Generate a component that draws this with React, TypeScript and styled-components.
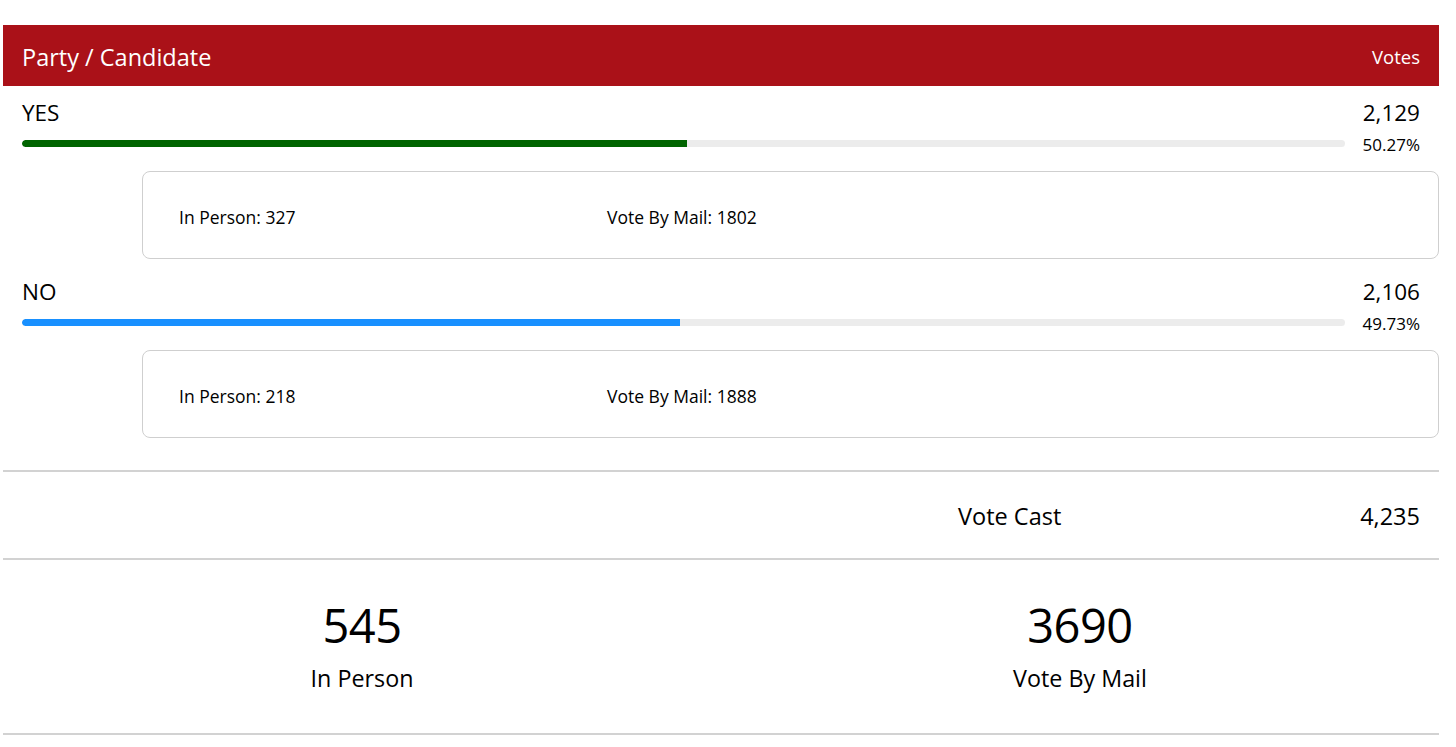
import React from "react";
import styled, { createGlobalStyle } from "styled-components";

const Global = createGlobalStyle`
  html, body { margin: 0; padding: 0; background: #fff; }
  body { font-family: "Open Sans", "Noto Sans", Arial, sans-serif; color: #000; }
`;

const Wrapper = styled.div`
  width: 1436px;
  margin: 25px 0 0 3px;
`;

const Header = styled.div`
  height: 61px;
  background: #aa1118;
  color: #fff;
  display: flex;
  align-items: center;
  justify-content: space-between;
  padding: 0 19px 0 19px;
  box-sizing: border-box;
`;

const HeaderTitle = styled.span`
  font-size: 23.5px;
  margin-top: 2px;
`;

const HeaderVotes = styled.span`
  font-size: 18.5px;
  margin-top: 2px;
`;

const Block = styled.div`
  padding: 14px 0 6px 19px;
`;

const NameRow = styled.div`
  display: flex;
  justify-content: space-between;
  align-items: center;
  height: 26px;
  padding-right: 19px;
  font-size: 22.5px;
  line-height: 26px;
`;

const BarRow = styled.div`
  display: grid;
  grid-template-columns: 1fr 75px;
  align-items: start;
  margin-top: 7px;
  height: 22px;
  padding-right: 19px;
`;

const Track = styled.div`
  height: 7px;
  margin-top: 7px;
  border-radius: 4px;
  background: #ececec;
  overflow: hidden;
`;

const Fill = styled.div<{ $color: string }>`
  height: 100%;
  background: ${(p) => p.$color};
  border-radius: 4px 0 0 4px;
`;

const Pct = styled.span`
  text-align: right;
  font-size: 17px;
  line-height: 22px;
  margin-top: 1px;
`;

const Card = styled.div`
  margin: 16px 0 0 120px;
  height: 88px;
  box-sizing: border-box;
  border: 1.5px solid #cfcfcf;
  border-radius: 8px;
  display: grid;
  grid-template-columns: 428px 1fr;
  align-items: center;
  padding: 4px 0 0 36px;
  font-size: 17.5px;
`;

const Divider = styled.hr<{ $top?: number }>`
  margin: ${(p) => p.$top ?? 0}px 0 0 0;
  border: none;
  height: 2px;
  background: #d2d2d2;
`;

const TotalRow = styled.div`
  display: grid;
  grid-template-columns: 955px 1fr;
  height: 86px;
  align-items: center;
  font-size: 23.5px;
`;

const TotalCell = styled.div`
  display: flex;
  justify-content: space-between;
  padding: 2px 19px 0 0;
`;

const Stats = styled.div`
  display: grid;
  grid-template-columns: 1fr 1fr;
  height: 173px;
`;

const Stat = styled.div`
  display: flex;
  flex-direction: column;
  align-items: center;
  padding-top: 34px;
`;

const StatNum = styled.div`
  font-size: 47px;
  line-height: 62px;
  letter-spacing: -0.5px;
`;

const StatLabel = styled.div`
  font-size: 23.3px;
  line-height: 30px;
  margin-top: 7px;
`;

type Cand = {
  name: string;
  votes: string;
  pct: number;
  color: string;
  inPerson: number;
  mail: number;
};

const candidates: Cand[] = [
  { name: "YES", votes: "2,129", pct: 50.27, color: "#006400", inPerson: 327, mail: 1802 },
  { name: "NO", votes: "2,106", pct: 49.73, color: "#1890ff", inPerson: 218, mail: 1888 },
];

export default function App() {
  return (
    <>
      <Global />
      <Wrapper>
        <Header>
          <HeaderTitle>Party / Candidate</HeaderTitle>
          <HeaderVotes>Votes</HeaderVotes>
        </Header>
        {candidates.map((c) => (
          <Block key={c.name}>
            <NameRow>
              <span>{c.name}</span>
              <span>{c.votes}</span>
            </NameRow>
            <BarRow>
              <Track>
                <Fill $color={c.color} style={{ width: `${c.pct}%` }} />
              </Track>
              <Pct>{c.pct.toFixed(2)}%</Pct>
            </BarRow>
            <Card>
              <span>In Person: {c.inPerson}</span>
              <span>Vote By Mail: {c.mail}</span>
            </Card>
          </Block>
        ))}
        <Divider $top={26} />
        <TotalRow>
          <div />
          <TotalCell>
            <span>Vote Cast</span>
            <span>4,235</span>
          </TotalCell>
        </TotalRow>
        <Divider />
        <Stats>
          <Stat>
            <StatNum>545</StatNum>
            <StatLabel>In Person</StatLabel>
          </Stat>
          <Stat>
            <StatNum>3690</StatNum>
            <StatLabel>Vote By Mail</StatLabel>
          </Stat>
        </Stats>
        <Divider />
      </Wrapper>
    </>
  );
}
